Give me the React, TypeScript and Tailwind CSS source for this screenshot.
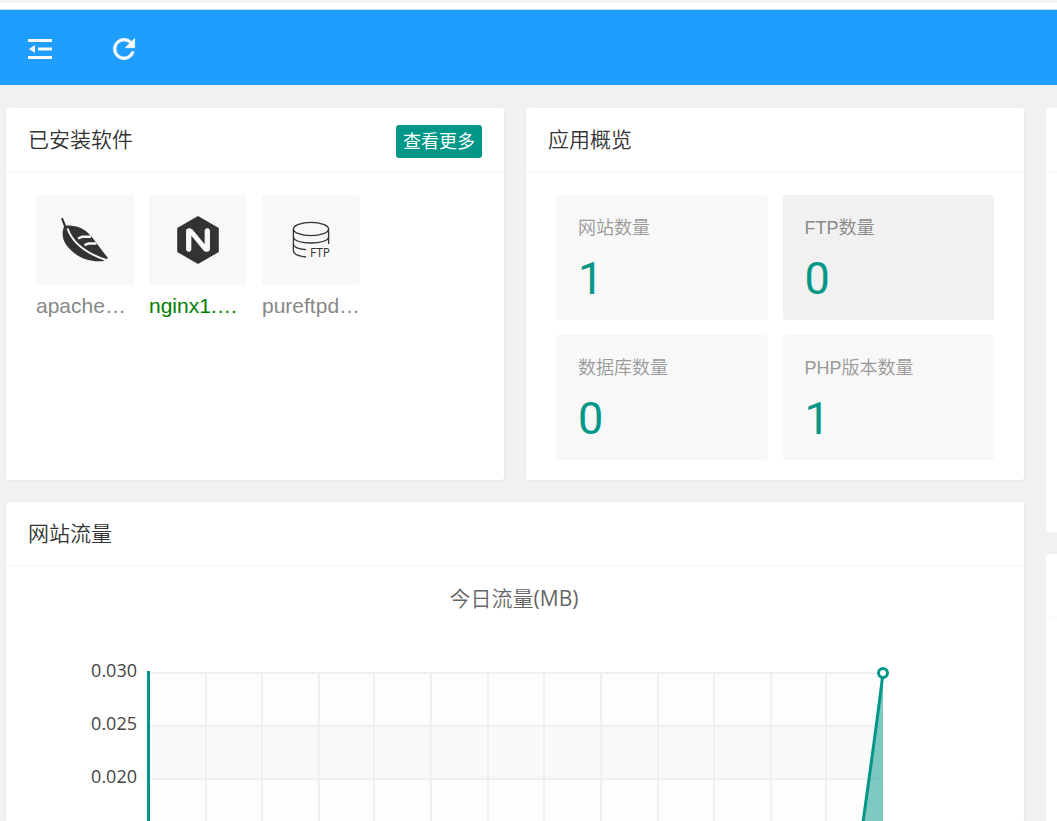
import type { ReactNode } from "react";
import { SiNginx } from "react-icons/si";

const stats = [
  { label: "网站数量", value: 1 },
  { label: "FTP数量", value: 0, active: true },
  { label: "数据库数量", value: 0 },
  { label: "PHP版本数量", value: 1 },
];

const software = [
  { name: "apache…", icon: <FeatherIcon />, running: false },
  { name: "nginx1.…", icon: <SiNginx size={48} />, running: true },
  { name: "pureftpd…", icon: <FtpIcon />, running: false },
];

// chart geometry, 53 per tick
const columns = [200, 256, 313, 368, 425, 482, 538, 595, 652, 708, 765, 820];
const ticks = ["0.030", "0.025", "0.020"];

function FeatherIcon() {
  return (
    <svg width="50" height="48" viewBox="0 0 50 48" fill="none">
      <path
        d="M1 2.500 2.600 1.800C4 4 5 7 6 9.600 17 9 25 13 31 20c6 7 11 15 17 22l-1.500 1-3 2c-10 1-20-1-28-7C5 30 0 22 4 10.500 3 8 2 5 1 2.500Z"
        fill="currentColor"
      />
      <path d="M7.500 12.500C12 25 22 36 46 44" stroke="#f8f8f8" strokeWidth="2" />
      <path d="m18 22.500 4-1.700h9M24.500 29.200l4-1.700h8" stroke="#f8f8f8" strokeWidth="2.400" />
    </svg>
  );
}

function FtpIcon() {
  return (
    <svg width="42" height="44" viewBox="0 0 42 44" fill="none" stroke="currentColor" strokeWidth="1.300">
      <ellipse cx="21" cy="11" rx="17.600" ry="6.600" />
      <path d="M3.400 11v22c0 3 5 5 12.600 6M38.600 11v15" />
      <path d="M3.400 19c0 8 35.200 8 35.200 0M3.400 26c0 3 5 5 12.600 5.600" />
      <text x="20" y="39" fontSize="12" fill="#333" stroke="none" className="font-['Open_Sans',sans-serif]">
        FTP
      </text>
    </svg>
  );
}

function Card({ title, action, children }: { title: string; action?: ReactNode; children: ReactNode }) {
  return (
    <section className="bg-white rounded-[3px] shadow-[0_1px_3px_rgba(0,0,0,0.06)]">
      <header className="h-16 px-[22px] pt-[17px] flex items-start justify-between border-b border-[#f5f5f5]">
        <h2 className="text-[21px] leading-[30px] font-[350] text-[#333]">{title}</h2>
        {action}
      </header>
      {children}
    </section>
  );
}

function TrafficChart() {
  return (
    <svg viewBox="0 0 1018 256" className="block w-full font-['Open_Sans','Noto_Sans_CJK_SC',sans-serif]">
      <text x="508" y="40" textAnchor="middle" fontSize="21" fill="#666" className="font-[350]">
        今日流量<tspan className="font-normal">(MB)</tspan>
      </text>
      {ticks.map((tick, i) => (
        <rect key={tick} x="142" y={106 + i * 53} width="735" height="53" fill={i % 2 ? "#f9f9f9" : "#fdfdfd"} />
      ))}
      <g stroke="#f0f0f0" strokeWidth="2">
        {columns.map((x) => (
          <path key={x} d={`M${x} 107V256`} />
        ))}
        {ticks.map((tick, i) => (
          <path key={tick} d={`M142 ${107 + i * 53}H877`} />
        ))}
      </g>
      {ticks.map((tick, i) => (
        <text key={tick} x="131" y={111 + i * 53} textAnchor="end" fontSize="18" fill="#444">
          {tick}
        </text>
      ))}
      <path d="M877 107C871 157 864 206 857 256H877Z" fill="#009688" fillOpacity="0.500" />
      <path d="M877 107C871 157 864 206 857 256" fill="none" stroke="#009688" strokeWidth="3" />
      <path d="M142.500 105V256" stroke="#009688" strokeWidth="3" />
      <circle cx="877" cy="107" r="4.500" fill="#fff" stroke="#009688" strokeWidth="3" />
    </svg>
  );
}

export default function App() {
  return (
    <div className="h-screen overflow-hidden bg-[#f1f1f1] font-['Liberation_Sans','Noto_Sans_CJK_SC',sans-serif]">
      <div className="h-2.5 border-t-[3px] border-t-[#f1f2f4] border-b border-b-[#ccdde9] bg-white" />

      <nav className="h-[75px] px-7 pt-0.5 flex items-center gap-14 bg-[#1e9fff] text-[#f8f8f8]">
        <button type="button" aria-label="侧边伸缩">
          <svg width="24" height="20" viewBox="0 0 24 20" fill="currentColor" className="block">
            <path d="M0 0h24v3H0zM10 8.500h14v3H10zM0 17h24v3H0zM1 10l6-4v8z" />
          </svg>
        </button>
        <button type="button" aria-label="刷新">
          <svg width="32" height="32" viewBox="0 0 24 24" fill="currentColor" stroke="currentColor" strokeWidth="0.500" className="block">
            <path d="M17.650 6.350A7.960 7.960 0 0 0 12 4a8 8 0 1 0 7.730 10h-2.080A6 6 0 1 1 12 6c1.660 0 3.140.69 4.220 1.780L13 11h7V4z" />
          </svg>
        </button>
      </nav>

      <main className="flex gap-[22px] pl-1.5 pt-[23px]">
        <div className="flex-1 min-w-0 flex flex-col gap-[22px]">
          <div className="grid grid-cols-2 gap-[22px]">
            <Card
              title="已安装软件"
              action={
                <button type="button" className="h-[33px] px-[7px] rounded-[3px] bg-[#009688] text-lg leading-8 text-white">
                  查看更多
                </button>
              }
            >
              <ul className="flex gap-[15px] px-[30px] pt-[23px]">
                {software.map((item) => (
                  <li key={item.name} className="w-[98px]">
                    <a href="#" className="block">
                      <span className="h-[90px] flex items-center justify-center rounded-[3px] bg-[#f8f8f8] text-[#333]">
                        {item.icon}
                      </span>
                      <span
                        className={`block text-[21px] leading-[42px] whitespace-nowrap ${
                          item.running ? "text-[#008000]" : "text-[#888]"
                        }`}
                      >
                        {item.name}
                      </span>
                    </a>
                  </li>
                ))}
              </ul>
            </Card>

            <Card title="应用概览">
              <ul className="grid grid-cols-2 gap-[15px] px-[30px] pt-[23px] pb-5">
                {stats.map((stat) => (
                  <li key={stat.label}>
                    <a
                      href="#"
                      className={`block h-[125px] px-[22px] pt-[17px] rounded-[3px] ${
                        stat.active ? "bg-[#f1f1f1] text-[#888]" : "bg-[#f8f8f8] text-[#999]"
                      }`}
                    >
                      <h3 className="text-lg leading-8 font-[350]">{stat.label}</h3>
                      <p className="font-[Roboto,sans-serif] text-[45px] leading-[70px] text-[#009688]">{stat.value}</p>
                    </a>
                  </li>
                ))}
              </ul>
            </Card>
          </div>

          <Card title="网站流量">
            <TrafficChart />
          </Card>
        </div>

        {/* side column, cut off by the window edge */}
        <aside className="w-[11px] flex flex-col gap-[22px]">
          <div className="h-[424px] rounded-l-[3px] bg-white">
            <div className="h-16 border-b border-[#f5f5f5]" />
          </div>
          <div className="h-[424px] rounded-l-[3px] bg-white">
            <div className="h-16 border-b border-[#f5f5f5]" />
          </div>
        </aside>
      </main>
    </div>
  );
}
